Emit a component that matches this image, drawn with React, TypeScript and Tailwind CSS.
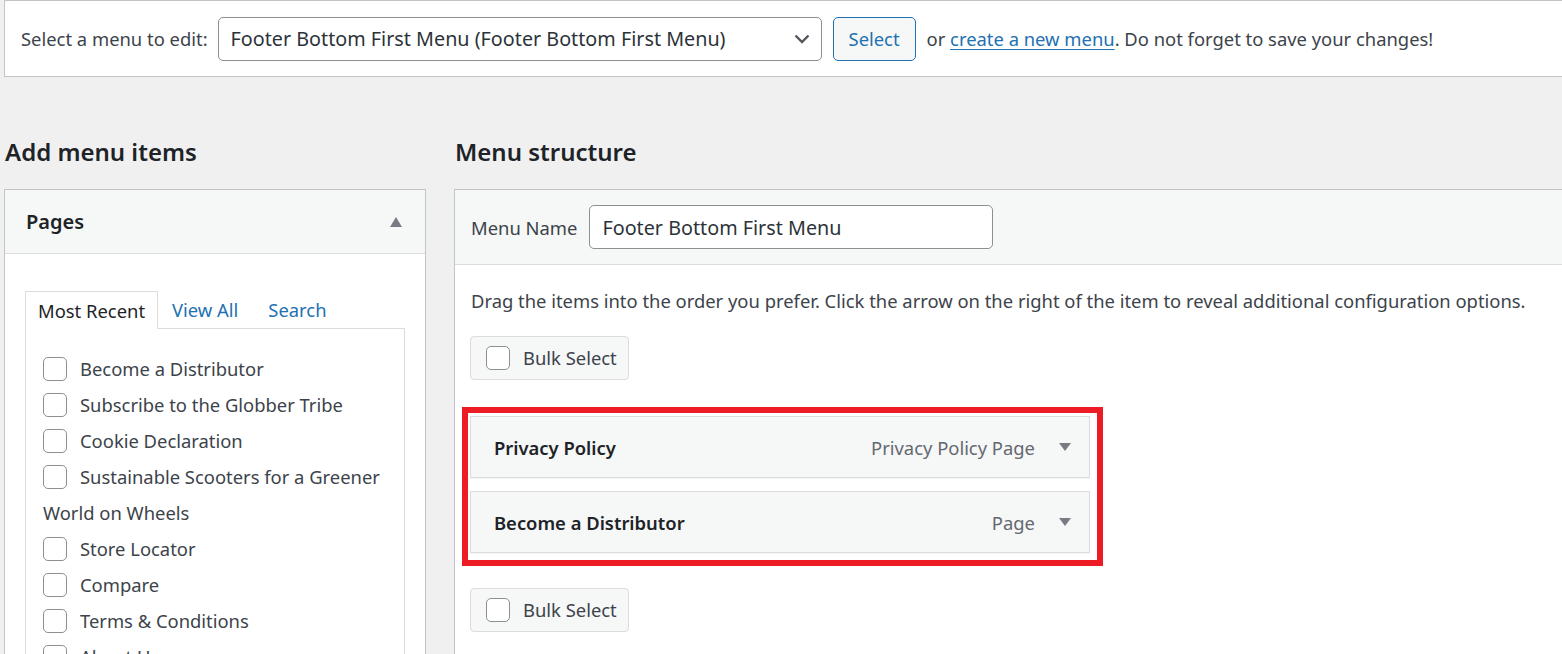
import React from "react";

function Checkbox({ inline }: { inline?: boolean }) {
  return (
    <span
      className={
        inline
          ? "inline-block w-[24px] h-[24px] border border-[#8c8f94] rounded-[5px] bg-white align-top relative top-[6px]"
          : "inline-block w-[24px] h-[24px] border border-[#8c8f94] rounded-[5px] bg-white shrink-0"
      }
    />
  );
}

function TriDown() {
  return (
    <svg width="12" height="8" viewBox="0 0 12 8" className="block">
      <polygon points="0,0 12,0 6,8" fill="#787c82" />
    </svg>
  );
}

function TriUp() {
  return (
    <svg width="12" height="10" viewBox="0 0 12 10" className="block">
      <polygon points="6,0 12,10 0,10" fill="#787c82" />
    </svg>
  );
}

function BulkSelect() {
  return (
    <div className="w-[159px] h-[44px] border border-[#dcdcde] rounded-[4px] bg-[#f6f7f7] flex items-center pl-[15px] gap-[13px]">
      <Checkbox />
      <span className="text-[18.4px] text-[#3c434a]">Bulk Select</span>
    </div>
  );
}

function MenuItem({ title, type }: { title: string; type: string }) {
  return (
    <div className="w-[620px] h-[62px] bg-[#f6f7f7] border border-[#dcdcde] shadow-[0_1px_1px_rgba(0,0,0,0.04)] flex items-center pl-[23px] pr-[18px]">
      <span className="text-[18.4px] font-semibold text-[#1d2327] flex-1 pt-[2px]">{title}</span>
      <span className="text-[18.4px] text-[#646970] mr-[24px] pt-[2px]">{type}</span>
      <TriDown />
    </div>
  );
}

const pages = [
  "Become a Distributor",
  "Subscribe to the Globber Tribe",
  "Cookie Declaration",
  "Sustainable Scooters for a Greener World on Wheels",
  "Store Locator",
  "Compare",
  "Terms & Conditions",
  "About Us",
  "Contact",
];

export default function App() {
  return (
    <div className="h-[654px] overflow-hidden bg-[#f0f0f1] pl-[4px] font-['Noto_Sans',sans-serif] text-[#3c434a]">
      {/* Top bar */}
      <div className="h-[77px] bg-white border border-r-0 border-[#c3c4c7] flex items-center pl-[16px]">
        <span className="text-[18.4px]">Select a menu to edit:</span>
        <div className="ml-[10px] w-[604px] h-[44px] border border-[#8c8f94] rounded-[5px] bg-white flex items-center pl-[12px] pr-[11px]">
          <span className="flex-1 text-[19.75px] text-[#2c3338]">
            Footer Bottom First Menu (Footer Bottom First Menu)
          </span>
          <svg width="16" height="10" viewBox="0 0 16 10" className="block">
            <polyline points="1.5,1.5 8,8 14.5,1.5" fill="none" stroke="#50575e" strokeWidth="2.4" />
          </svg>
        </div>
        <div className="ml-[11px] w-[83px] h-[44px] border border-[#2271b1] rounded-[5px] bg-[#f6f7f7] flex items-center justify-center text-[18.4px] text-[#2271b1]">
          Select
        </div>
        <span className="ml-[11px] text-[18.4px]">
          or{" "}
          <span className="text-[#2271b1] underline underline-offset-[3px]">create a new menu</span>
          . Do not forget to save your changes!
        </span>
      </div>

      <div className="flex mt-[58px]">
        {/* Left column */}
        <div className="w-[422px] shrink-0">
          <h2 className="pl-[1px] text-[24px] leading-[33px] font-semibold text-[#1d2327]">Add menu items</h2>
          <div className="mt-[21px] border border-[#c3c4c7] bg-white">
            <div className="h-[64px] bg-[#f6f7f7] border-b border-[#dcdcde] flex items-center justify-between pl-[21px] pr-[23px]">
              <span className="text-[20px] font-semibold text-[#1d2327] pt-[1px]">Pages</span>
              <TriUp />
            </div>
            <div className="pt-[37px] px-[20px]">
              <div className="flex h-[37px] text-[18.4px]">
                <div className="relative z-10 bg-white border border-b-0 border-[#dcdcde] px-[12px] flex items-center text-[#1d2327] h-[38px] pt-[1px]">
                  Most Recent
                </div>
                <div className="pl-[14px] pr-[15px] flex items-center text-[#2271b1] pt-[1px]">View All</div>
                <div className="px-[15px] flex items-center text-[#2271b1] pt-[1px]">Search</div>
              </div>
              <div className="border border-[#dcdcde] bg-white pt-[22px] pl-[17px] pr-[14px] pb-[20px]">
                {pages.map((p) => (
                  <div key={p} className="leading-[36px] text-[18.4px] text-[#3c434a]">
                    <Checkbox inline />
                    <span className="ml-[13px]">{p}</span>
                  </div>
                ))}
              </div>
            </div>
          </div>
        </div>

        {/* Right column */}
        <div className="ml-[28px] flex-1 min-w-0">
          <h2 className="pl-[1px] text-[24px] leading-[33px] font-semibold text-[#1d2327]">Menu structure</h2>
          <div className="mt-[21px] border border-r-0 border-[#c3c4c7] bg-white">
            <div className="h-[75px] bg-[#f6f7f7] border-b border-[#dcdcde] flex items-center pl-[16px]">
              <span className="text-[18.4px] pt-[1px]">Menu Name</span>
              <div className="ml-[12px] w-[404px] h-[44px] border border-[#8c8f94] rounded-[5px] bg-white flex items-center pl-[12px] pt-[2px] text-[19.75px] text-[#2c3338]">
                Footer Bottom First Menu
              </div>
            </div>
            <div className="pl-[15px] pt-[23px] pb-[30px]">
              <p className="pl-[1px] text-[18.4px] leading-[26px] whitespace-nowrap">
                Drag the items into the order you prefer. Click the arrow on the right of the item to reveal additional configuration options.
              </p>
              <div className="mt-[22px]">
                <BulkSelect />
              </div>
              <div className="mt-[27px] ml-[-8px] w-[641px] border-[6px] border-[#ed1c24] pl-[2px] pr-[7px] pt-[3px] pb-[7px]">
                <MenuItem title="Privacy Policy" type="Privacy Policy Page" />
                <div className="mt-[13px]">
                  <MenuItem title="Become a Distributor" type="Page" />
                </div>
              </div>
              <div className="mt-[22px]">
                <BulkSelect />
              </div>
            </div>
          </div>
        </div>
      </div>
    </div>
  );
}
